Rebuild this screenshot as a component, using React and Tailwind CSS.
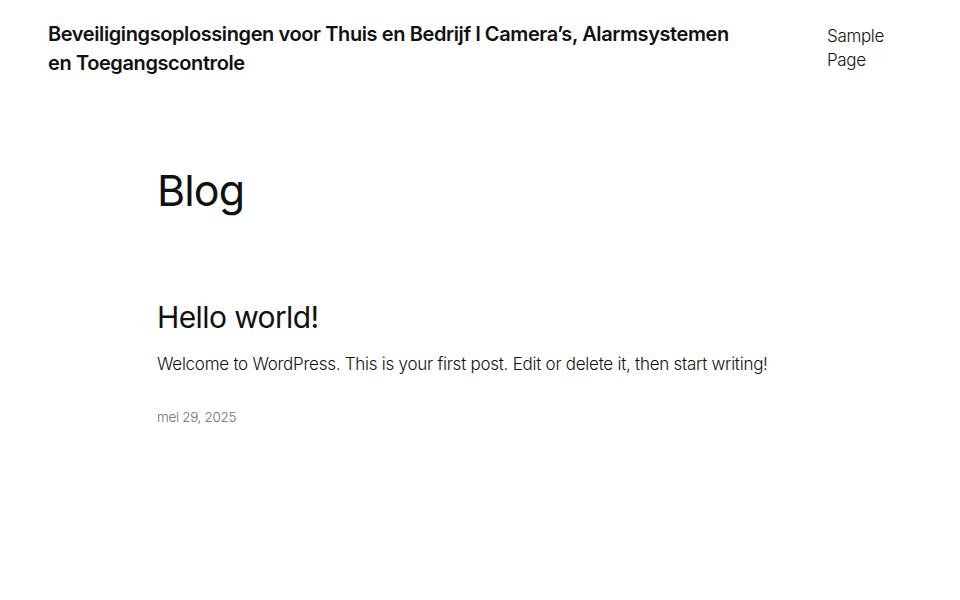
import React from 'react';

export default function App() {
    return (
        <div className="min-h-[600px] bg-white text-[#111111]" style={{ fontFamily: 'Inter, "Noto Sans", sans-serif' }}>
            {/* Header */}
            <header className="flex justify-between items-start pl-12 pr-[47px] pt-[20px]">
                <a href="#" className="w-[700px] text-[20px] leading-[29px] font-semibold tracking-[-0.02em]">
                    Beveiligingsoplossingen voor Thuis en Bedrijf l Camera’s, Alarmsystemen en Toegangscontrole
                </a>
                <nav className="w-[86px] pt-[4px]">
                    <a href="#" className="text-[17px] leading-[24px] font-light tracking-[-0.02em]">Sample Page</a>
                </nav>
            </header>

            <main className="w-[646px] mx-auto">
                <h1 className="mt-[85px] text-[43px] leading-[54px] tracking-[-0.02em]">Blog</h1>

                <article className="mt-[80px]">
                    <h2 className="text-[30px] leading-[40px] tracking-[-0.02em]">
                        <a href="#">Hello world!</a>
                    </h2>
                    <p className="mt-[13px] text-[17px] leading-[28px] font-light tracking-[-0.015em]">
                        Welcome to WordPress. This is your first post. Edit or delete it, then start writing!
                    </p>
                    <div className="mt-[29px] text-[13.5px] leading-[20px] font-light text-[#6b6b6b] tracking-[-0.025em]">
                        mei 29, 2025
                    </div>
                </article>
            </main>
        </div>
    );
}
